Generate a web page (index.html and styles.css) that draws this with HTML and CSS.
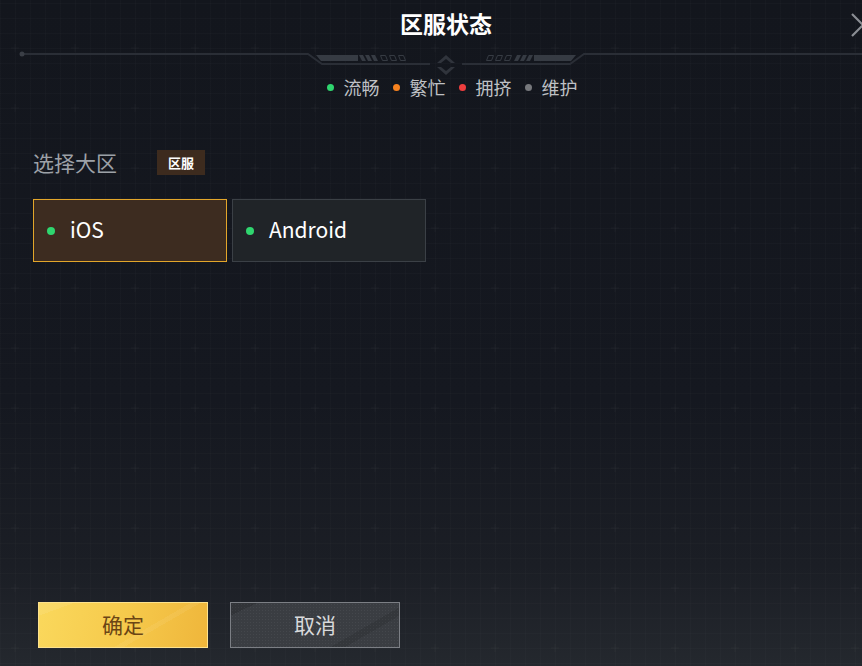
FILE: index.html
```html
<!DOCTYPE html>
<html lang="zh-CN">
<head>
<meta charset="utf-8">
<title>区服状态</title>
<link rel="stylesheet" href="styles.css">
</head>
<body>
<div class="dialog">
  <header class="header">
    <h1 class="title">区服状态</h1>
    <svg class="ornament" width="892" height="33" viewBox="0 44 892 33" aria-hidden="true">
      <g fill="none" stroke="#2a2e36" stroke-width="2">
        <path d="M22 54 H308 L322 64 H430"/>
        <path d="M892 54 H584 L570 64 H462"/>
      </g>
      <circle cx="22" cy="54" r="2.5" fill="#3a3e46"/>
      <g fill="#363b43">
        <polygon points="316,55 358,55 358,61 321,61"/>
        <polygon points="359,55 363,55 366,61 362,61"/>
        <polygon points="365,55 369,55 372,61 368,61"/>
        <polygon points="371,55 375,55 378,61 374,61"/>
        <polygon points="576,55 534,55 534,61 571,61"/>
        <polygon points="533,55 529,55 526,61 530,61"/>
        <polygon points="527,55 523,55 520,61 524,61"/>
        <polygon points="521,55 517,55 514,61 518,61"/>
      </g>
      <g fill="none" stroke="#363b43" stroke-width="1">
        <polygon points="380.5,55.5 385.5,55.5 387.5,60.5 382.5,60.5"/>
        <polygon points="389.5,55.5 394.5,55.5 396.5,60.5 391.5,60.5"/>
        <polygon points="398.5,55.5 403.5,55.5 405.5,60.5 400.5,60.5"/>
        <polygon points="511.5,55.5 506.5,55.5 504.5,60.5 509.5,60.5"/>
        <polygon points="502.5,55.5 497.5,55.5 495.5,60.5 500.5,60.5"/>
        <polygon points="493.5,55.5 488.5,55.5 486.5,60.5 491.5,60.5"/>
      </g>
      <g fill="#30343c">
        <polygon points="446,55 455,63 451,63 446,59 441,63 437,63"/>
        <polygon points="446,75 455,67 451,67 446,71 441,67 437,67"/>
      </g>
    </svg>
    <ul class="legend">
      <li class="legend-item"><span class="dot dot-green"></span>流畅</li>
      <li class="legend-item"><span class="dot dot-orange"></span>繁忙</li>
      <li class="legend-item"><span class="dot dot-red"></span>拥挤</li>
      <li class="legend-item"><span class="dot dot-gray"></span>维护</li>
    </ul>
    <button class="close" aria-label="关闭">
      <svg width="24" height="24" viewBox="0 0 24 24"><path d="M1 1 L23 23 M1 23 L23 1" stroke="#8b8e94" stroke-width="2.2" fill="none"/></svg>
    </button>
  </header>

  <main class="content">
    <div class="section-head">
      <span class="section-label">选择大区</span>
      <span class="badge">区服</span>
    </div>
    <div class="cards">
      <div class="card card-active"><span class="dot dot-green card-dot"></span>iOS</div>
      <div class="card"><span class="dot dot-green card-dot"></span>Android</div>
    </div>
  </main>

  <footer class="footer">
    <button class="btn btn-confirm">确定</button>
    <button class="btn btn-cancel">取消</button>
  </footer>
</div>
</body>
</html>
```

FILE: styles.css
```css
html, body {
  margin: 0;
  padding: 0;
  height: 100%;
  overflow: hidden;
  background: #13161d;
}

body {
  font-family: "Noto Sans CJK SC", "Noto Sans", sans-serif;
}

.dialog {
  position: relative;
  width: 892px;
  height: 666px;
  display: flex;
  flex-direction: column;
  background-color: #13161d;
  background-image:
    url("data:image/svg+xml,%3Csvg xmlns='http://www.w3.org/2000/svg' width='60' height='60'%3E%3Cpath d='M15 44 V52 M11 48 H19' stroke='%23ffffff' stroke-opacity='0.025' stroke-width='1'/%3E%3C/svg%3E"),
    repeating-linear-gradient(to right, rgba(255,255,255,0.014) 0 1px, transparent 1px 15px),
    repeating-linear-gradient(to bottom, rgba(255,255,255,0.014) 0 1px, transparent 1px 15px),
    linear-gradient(to bottom, #13161d 0%, #151820 60%, #1b1e25 85%, #24282e 100%);
  background-position: 0 0, 0 0, 0 3px, 0 0;
  overflow: hidden;
}

.header {
  display: flex;
  flex-direction: column;
  align-items: center;
}

.title {
  margin: 0;
  padding-top: 3px;
  height: 41px;
  line-height: 40px;
  font-size: 23px;
  font-weight: 700;
  color: #ffffff;
}

.ornament {
  display: block;
}

.legend {
  list-style: none;
  margin: 0;
  padding: 0 0 0 12px;
  display: flex;
  gap: 13px;
  height: 20px;
  line-height: 20px;
  font-size: 18px;
  color: #bfc1c5;
}

.legend-item {
  display: flex;
  align-items: center;
}

.dot {
  display: inline-block;
  width: 7px;
  height: 7px;
  border-radius: 50%;
  margin-right: 10px;
}

.dot-green { background: #2fd66f; }
.dot-orange { background: #f7821f; }
.dot-red { background: #ee3e3e; }
.dot-gray { background: #76787c; }

.close {
  position: absolute;
  top: 13px;
  left: 851px;
  padding: 0;
  border: 0;
  background: none;
  width: 24px;
  height: 24px;
}

.close svg { display: block; }

.content {
  padding: 53px 0 0 33px;
}

.section-head {
  display: flex;
  align-items: center;
  height: 25px;
}

.section-label {
  font-size: 21px;
  color: #9da1a7;
  width: 124px;
  line-height: 25px;
}

.badge {
  display: inline-block;
  width: 48px;
  height: 25px;
  line-height: 25px;
  text-align: center;
  background: #3d2b1e;
  color: #ffffff;
  font-size: 13px;
  font-weight: 700;
}

.cards {
  display: flex;
  gap: 5px;
  margin-top: 24px;
}

.card {
  box-sizing: border-box;
  width: 194px;
  height: 63px;
  display: flex;
  align-items: center;
  padding-left: 13px;
  padding-bottom: 3px;
  background: #202428;
  border: 1px solid #3b4046;
  color: #ffffff;
  font-size: 21px;
  font-weight: 400;
}

.card-active {
  background: #3d2c20;
  border-color: #e3a62a;
}

.card-dot {
  width: 8px;
  height: 8px;
  margin-right: 15px;
  margin-top: 3px;
}

.footer {
  margin-top: auto;
  display: flex;
  gap: 22px;
  padding: 0 0 18px 38px;
}

.btn {
  box-sizing: border-box;
  width: 170px;
  height: 46px;
  margin: 0;
  padding: 0 0 2px;
  font-family: "Noto Sans CJK SC", "Noto Sans", sans-serif;
  font-size: 21px;
  font-weight: 400;
  cursor: pointer;
}

.btn-confirm {
  color: #6b4515;
  border: 1px solid #fde28e;
  background:
    linear-gradient(160deg, rgba(255,255,255,0.08) 0 12%, transparent 12% 100%),
    linear-gradient(150deg, transparent 0 62%, rgba(255,255,255,0.06) 62% 66%, transparent 66% 100%),
    linear-gradient(100deg, #fad85c 0%, #f6ca4c 50%, #efb63b 100%);
}

.btn-cancel {
  color: #d8d9db;
  border: 1px solid #7c7f85;
  background:
    linear-gradient(155deg, rgba(0,0,0,0.15) 0 10%, transparent 10% 100%),
    linear-gradient(150deg, transparent 0 72%, rgba(0,0,0,0.1) 72% 78%, transparent 78% 100%),
    radial-gradient(circle, rgba(255,255,255,0.05) 0.8px, transparent 1px) 0 0 / 3px 3px,
    #3a3d42;
}
```
